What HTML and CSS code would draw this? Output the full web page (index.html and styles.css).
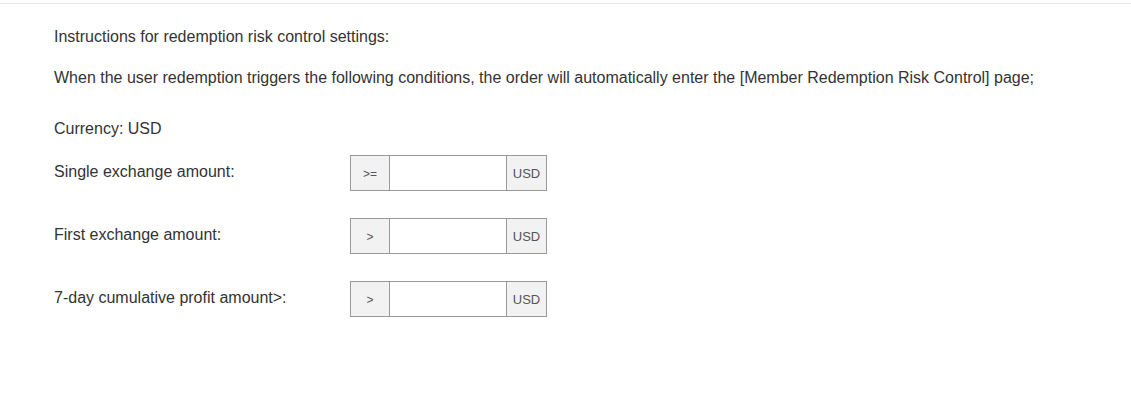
FILE: index.html
```html
<!DOCTYPE html>
<html lang="en">
<head>
<meta charset="utf-8">
<title>Redemption risk control settings</title>
<link rel="stylesheet" href="styles.css">
</head>
<body>
<div class="page">
  <div class="panel">
    <p class="intro">Instructions for redemption risk control settings:</p>
    <p class="desc">When the user redemption triggers the following conditions, the order will automatically enter the [Member Redemption Risk Control] page;</p>
    <p class="currency">Currency: USD</p>
    <div class="form">
      <div class="row">
        <label class="label">Single exchange amount:</label>
        <div class="group">
          <span class="addon prefix">&gt;=</span>
          <input class="field" type="text">
          <span class="addon suffix">USD</span>
        </div>
      </div>
      <div class="row">
        <label class="label">First exchange amount:</label>
        <div class="group">
          <span class="addon prefix">&gt;</span>
          <input class="field" type="text">
          <span class="addon suffix">USD</span>
        </div>
      </div>
      <div class="row">
        <label class="label">7-day cumulative profit amount&gt;:</label>
        <div class="group">
          <span class="addon prefix">&gt;</span>
          <input class="field" type="text">
          <span class="addon suffix">USD</span>
        </div>
      </div>
    </div>
  </div>
</div>
</body>
</html>
```

FILE: styles.css
```css
* { box-sizing: border-box; }

html, body {
  margin: 0;
  padding: 0;
  background: #ffffff;
}

body {
  font-family: "Liberation Sans", Arial, Helvetica, sans-serif;
  font-size: 16px;
  color: #333333;
}

.page {
  padding-top: 3px;
}

.panel {
  border-top: 1px solid #e6eaec;
  padding: 0 0 0 54px;
  min-height: 400px;
}

.panel p {
  margin: 0;
  line-height: 20px;
}

.intro { margin-top: 23px !important; }
.desc { margin-top: 21px !important; }
.currency { margin-top: 31px !important; }

.form {
  margin-top: 16px;
  display: flex;
  flex-direction: column;
  gap: 27px;
}

.row {
  display: flex;
  align-items: center;
}

.label {
  width: 296px;
  line-height: 20px;
  margin-top: -3px;
}

.group {
  display: flex;
  width: 197px;
  height: 36px;
  border: 1px solid #999999;
}

.addon {
  display: flex;
  align-items: center;
  justify-content: center;
  background: #f2f2f2;
  color: #555555;
  font-size: 12px;
}

.prefix {
  width: 39px;
  border-right: 1px solid #999999;
  padding-top: 2px;
}

.suffix {
  width: 40px;
  border-left: 1px solid #999999;
  font-size: 13px;
  padding-top: 1px;
}

.field {
  flex: 1;
  min-width: 0;
  border: 0;
  margin: 0;
  padding: 0 6px;
  font: inherit;
  background: #ffffff;
  outline: none;
}
```
